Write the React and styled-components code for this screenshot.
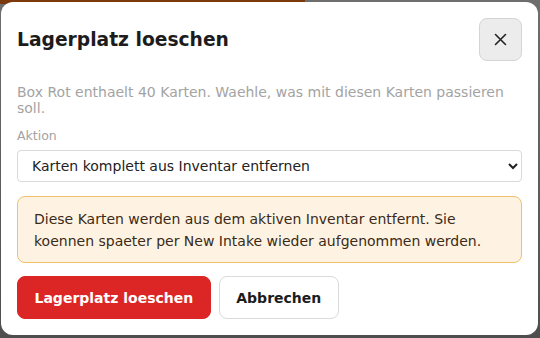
import React from 'react';
import styled, { createGlobalStyle } from 'styled-components';

const GlobalStyle = createGlobalStyle`
 html, body {
  margin: 0;
  padding: 0;
  background: #5c5c5c;
 }
 body {
  font-family: 'DejaVu Sans', 'Noto Sans', sans-serif;
 }
`;

const Backdrop = styled.div`
 width: 540px;
 height: 338px;
 box-sizing: border-box;
 padding: 2px 2px 3px 1px;
 background:
  linear-gradient(to right, #7c3a0c 0, #7c3a0c 305px, transparent 305px) top left / 100% 4px no-repeat,
  linear-gradient(to bottom, #6e6e6e, #4e4e4e);
`;

const Card = styled.div`
 height: 100%;
 box-sizing: border-box;
 background: #fff;
 border-radius: 12px;
 padding: 16px 16px 0 16px;
 display: flex;
 flex-direction: column;
`;

const Header = styled.div`
 display: flex;
 align-items: center;
 justify-content: space-between;
`;

const Title = styled.h2`
 margin: 0;
 font-size: 18.7px;
 font-weight: 700;
 color: #1c1c1c;
`;

const CloseButton = styled.button`
 width: 43px;
 height: 43px;
 border: 1px solid #d4d4d4;
 background: #ececec;
 border-radius: 8px;
 display: flex;
 align-items: center;
 justify-content: center;
 padding: 0;
 color: #222;
`;

const Description = styled.p`
 margin: 23px 0 0;
 font-size: 14px;
 line-height: 16px;
 color: #a3a3a3;
`;

const Label = styled.div`
 margin-top: 12px;
 font-size: 12.5px;
 line-height: 15px;
 color: #a3a3a3;
`;

const Select = styled.select`
 margin-top: 7px;
 width: 100%;
 height: 32px;
 border: 1px solid #d9d9d9;
 border-radius: 4px;
 background: #fff;
 padding: 0 10px;
 font-family: 'DejaVu Sans', sans-serif;
 font-size: 14px;
 color: #222;
`;

const Notice = styled.div`
 margin-top: 14px;
 background: #fef3e2;
 border: 1px solid #efc16f;
 border-radius: 8px;
 padding: 10.5px 16px;
 font-size: 14px;
 line-height: 22px;
 color: #3b2a18;
`;

const Actions = styled.div`
 margin-top: 13px;
 display: flex;
 gap: 8px;
`;

const Button = styled.button`
 height: 43px;
 padding: 0 16.5px;
 border-radius: 8px;
 font-family: 'DejaVu Sans', sans-serif;
 font-size: 14px;
 font-weight: 700;
 border: 1px solid ${p => (p.$danger ? '#dc2626' : '#dadada')};
 background: ${p => (p.$danger ? '#dc2626' : '#fff')};
 color: ${p => (p.$danger ? '#fff' : '#1c1c1c')};
`;

export default function App() {
 return (
  <>
   <GlobalStyle />
   <Backdrop>
    <Card>
     <Header>
      <Title>Lagerplatz loeschen</Title>
      <CloseButton aria-label='Schliessen'>
       <svg width='13' height='13' viewBox='0 0 13 13' fill='none' stroke='#222' strokeWidth='1.6' strokeLinecap='round'>
        <path d='M1.5 1.5 L11.5 11.5 M11.5 1.5 L1.5 11.5' />
       </svg>
      </CloseButton>
     </Header>
     <Description>
      Box Rot enthaelt 40 Karten. Waehle, was mit diesen Karten passieren soll.
     </Description>
     <Label>Aktion</Label>
     <Select defaultValue='remove'>
      <option value='remove'>Karten komplett aus Inventar entfernen</option>
     </Select>
     <Notice>
      Diese Karten werden aus dem aktiven Inventar entfernt. Sie koennen spaeter per New Intake wieder aufgenommen werden.
     </Notice>
     <Actions>
      <Button $danger>Lagerplatz loeschen</Button>
      <Button>Abbrechen</Button>
     </Actions>
    </Card>
   </Backdrop>
  </>
 );
}
